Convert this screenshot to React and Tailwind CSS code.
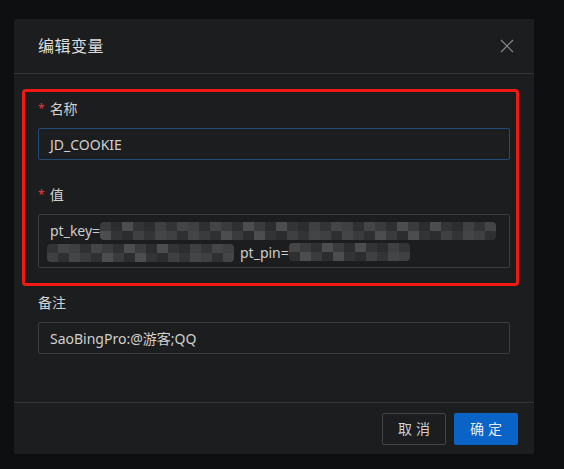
import React from "react";

const shades = [
  "bg-[#2c2d2f]",
  "bg-[#3a3b3d]",
  "bg-[#444547]",
  "bg-[#333436]",
  "bg-[#4c4d4f]",
  "bg-[#2f3032]",
  "bg-[#3f4042]",
];

// pixelated blur over the secret parts of the cookie
function Mosaic({ cols, rows, seed = 0, className = "" }) {
  const cells = [];
  for (let r = 0; r < rows; r++) {
    for (let c = 0; c < cols; c++) {
      cells.push(
        <span
          key={r + "-" + c}
          className={"block w-[11px] h-[9px] " + shades[(c * 5 + r * 3 + seed + ((c * c) % 4)) % shades.length]}
        />
      );
    }
  }
  return (
    <span
      className={"inline-grid rounded-[4px] overflow-hidden " + className}
      style={{ gridTemplateColumns: `repeat(${cols}, 11px)` }}
    >
      {cells}
    </span>
  );
}

function Label({ children, required }) {
  return (
    <div className="h-[22px] leading-[22px] mb-2 text-[14px] text-[#d2d2d2] flex items-center">
      {required && <span className="text-[#e8383d] mr-[5px] text-[12px] leading-none">*</span>}
      {children}
    </div>
  );
}

export default function App() {
  return (
    <div className="relative w-[564px] h-[469px] overflow-hidden bg-[#0e0f11] pt-[19px] pl-[14px] font-['Noto_Sans','Noto_Sans_CJK_SC',sans-serif]">
      <div className="w-[520px] bg-[#1c1d1f] rounded-[2px]">
        <div className="h-[55px] border-b border-[#333436] flex items-center justify-between pl-6 pr-5">
          <div className="text-[16px] text-[#dedede] tracking-[0.5px]">编辑变量</div>
          <svg width="14" height="14" viewBox="0 0 14 14" className="text-[#8c8c8c]">
            <path d="M1 1L13 13M13 1L1 13" stroke="currentColor" strokeWidth="1.1" />
          </svg>
        </div>

        <div className="px-6 pt-6 pb-6">
          <div className="mb-6">
            <Label required>名称</Label>
            <div className="h-8 border border-[#1f4d78] rounded-[2px] px-[11px] flex items-center text-[14px] text-[#d0d0d0]">
              JD_COOKIE
            </div>
          </div>

          <div className="mb-6">
            <Label required>值</Label>
            <div className="h-[54px] border border-[#3c3d3f] rounded-[2px] px-[11px] py-[4px] overflow-hidden text-[14px] text-[#cccccc]">
              <div className="h-[22px] flex items-center whitespace-nowrap">
                <span>pt_key=</span>
                <Mosaic cols={36} rows={2} seed={1} className="mt-[2px]" />
              </div>
              <div className="h-[22px] flex items-center whitespace-nowrap -ml-[3px]">
                <Mosaic cols={17} rows={2} seed={3} className="mt-[2px]" />
                <span className="ml-[6px]">pt_pin=</span>
                <Mosaic cols={11} rows={2} seed={2} />
              </div>
            </div>
          </div>

          <div className="mb-6">
            <Label>备注</Label>
            <div className="h-8 border border-[#3c3d3f] rounded-[2px] px-[11px] flex items-center text-[14px] text-[#d0d0d0]">
              SaoBingPro:@游客;QQ
            </div>
          </div>
        </div>

        <div className="h-[52px] border-t border-[#333436] flex items-center justify-end gap-2 pr-4">
          <button className="w-16 h-8 border border-[#434446] rounded-[2px] text-[14px] text-[#d0d0d0] tracking-[4px] pl-[4px]">
            取消
          </button>
          <button className="w-16 h-8 bg-[#0a64c8] rounded-[2px] text-[14px] text-[#eaeaea] tracking-[4px] pl-[4px]">
            确定
          </button>
        </div>
      </div>

      <div className="absolute left-[22px] top-[89px] w-[497px] h-[197px] border-[3px] border-[#f01a12] rounded-[4px] pointer-events-none" />
    </div>
  );
}
